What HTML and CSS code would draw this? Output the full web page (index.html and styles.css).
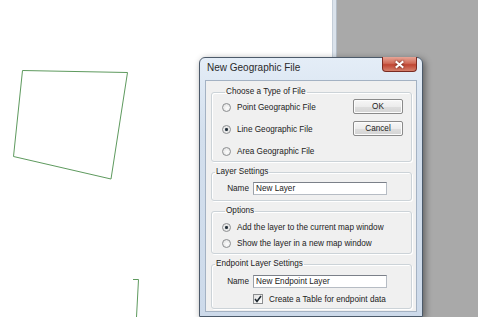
FILE: index.html
```html
<!DOCTYPE html>
<html lang="en">
<head>
  <meta charset="UTF-8" />
  <meta name="viewport" content="width=device-width, initial-scale=1.0" />
  <title>New Geographic File</title>
  <link rel="stylesheet" href="styles.css">
</head>
<body>
  <div class="desktop">
    <div class="map">
      <svg class="map-layer" width="332" height="317" viewBox="0 0 332 317">
        <polygon points="22.5,70.5 127.5,72.5 111,179 13.5,156.5" />
        <polyline points="133,279.5 138.5,279.5 136.5,317" />
      </svg>
    </div>
    <div class="edge"></div>
    <div class="workspace"></div>
  </div>

  <div class="dialog">
    <div class="titlebar">
      <span class="title">New Geographic File</span>
      <button class="close" title="Close">
        <svg width="11" height="9" viewBox="0 0 11 9">
          <path d="M2.5 2 L8.5 7 M8.5 2 L2.5 7" />
        </svg>
      </button>
    </div>

    <div class="client">
      <fieldset class="group group-type">
        <legend>Choose a Type of File</legend>
        <div class="type-row">
          <div class="choices">
            <label class="radio"><span class="mark"></span>Point Geographic File</label>
            <label class="radio checked"><span class="mark"></span>Line Geographic File</label>
            <label class="radio"><span class="mark"></span>Area Geographic File</label>
          </div>
          <div class="actions">
            <button class="btn">OK</button>
            <button class="btn">Cancel</button>
          </div>
        </div>
      </fieldset>

      <fieldset class="group group-layer">
        <legend>Layer Settings</legend>
        <div class="field">
          <span class="field-label">Name</span>
          <div class="textbox">New Layer</div>
        </div>
      </fieldset>

      <fieldset class="group group-options">
        <legend>Options</legend>
        <label class="radio checked"><span class="mark"></span>Add the layer to the current map window</label>
        <label class="radio"><span class="mark"></span>Show the layer in a new map window</label>
      </fieldset>

      <fieldset class="group group-endpoint">
        <legend>Endpoint Layer Settings</legend>
        <div class="field">
          <span class="field-label">Name</span>
          <div class="textbox">New Endpoint Layer</div>
        </div>
        <label class="check">
          <span class="box">
            <svg width="8" height="8" viewBox="0 0 8 8"><path d="M1 4 L3 6.5 L7 1" /></svg>
          </span>
          Create a Table for endpoint data
        </label>
      </fieldset>
    </div>
  </div>
</body>
</html>
```

FILE: styles.css
```css
/* Base */
* {
  margin: 0;
  padding: 0;
  box-sizing: border-box;
}

body {
  width: 478px;
  height: 317px;
  overflow: hidden;
  font-family: 'Liberation Sans', Arial, sans-serif;
  font-size: 8.2px;
  color: #222;
  background: #a9a9a9;
}

/* Map window + empty workspace behind the dialog */
.desktop {
  display: flex;
  height: 317px;
}

.map {
  width: 332px;
  background: #fff;
}

.map-layer {
  display: block;
  fill: none;
  stroke: #5e9a5e;
  stroke-width: 1;
}

.edge {
  width: 5px;
  background: #dbe3ec;
  border-left: 1px solid #c4ced9;
  border-right: 1px solid #b3bcc6;
}

.workspace {
  flex: 1;
  background: #a9a9a9;
}

/* Dialog window */
.dialog {
  position: absolute;
  left: 199px;
  top: 57px;
  width: 224px;
  height: 260px;
  display: flex;
  flex-direction: column;
  border: 1px solid #4c5a6a;
  border-radius: 6px 6px 0 0;
  background: linear-gradient(#e4edf7, #d3dfed 30%, #cddaea);
  box-shadow: 2px 2px 7px rgba(0, 0, 0, 0.45);
}

.titlebar {
  position: relative;
  height: 22px;
  padding: 4px 0 0 7px;
}

.title {
  font-size: 10px;
  color: #2a2a2a;
}

.close {
  position: absolute;
  top: -1px;
  right: 5px;
  width: 35px;
  height: 15px;
  display: flex;
  justify-content: center;
  align-items: center;
  border: 1px solid #7a2b22;
  border-top: none;
  border-radius: 0 0 4px 4px;
  background: linear-gradient(#e7a597, #d06a57 45%, #bf4532 55%, #d5806c);
}

.close svg {
  stroke: #fff;
  stroke-width: 2;
  stroke-linecap: square;
  filter: drop-shadow(0 0 1px #5a1a12);
}

.client {
  flex: 1;
  margin: 0 5px 4px;
  padding: 6px 4px 0 5px;
  display: flex;
  flex-direction: column;
  gap: 5px;
  background: #f0f0f0;
  border: 1px solid #a4b2c3;
}

/* Group boxes */
.group {
  min-width: 0;
  border: 1px solid #ccd3d8;
  border-radius: 3px;
  box-shadow: 1px 1px 0 #fff, inset 1px 1px 0 #fff;
}

.group legend {
  margin-left: 3px;
  padding: 0 1px;
  line-height: 10px;
}

.group-type {
  padding: 3px 8px 3px 10px;
}

.type-row {
  display: flex;
}

.choices {
  flex: 1;
  display: flex;
  flex-direction: column;
  gap: 8px;
}

.actions {
  display: flex;
  flex-direction: column;
  gap: 7px;
  margin-top: -1px;
}

.btn {
  width: 50px;
  height: 15px;
  font-family: inherit;
  font-size: 8.2px;
  color: #222;
  border: 1px solid #8a8a8a;
  border-radius: 2px;
  background: linear-gradient(#f7f7f7, #ececec 50%, #dedede 51%, #d4d4d4);
  box-shadow: inset 0 0 0 1px #fcfcfc;
}

/* Radio buttons + checkbox */
.radio {
  display: flex;
  align-items: center;
  height: 14px;
}

.mark {
  width: 9px;
  height: 9px;
  margin-right: 6px;
  border: 1px solid #8c8e90;
  border-radius: 50%;
  background: radial-gradient(circle at 60% 60%, #fdfdfd, #dcdcdc);
}

.radio.checked .mark {
  background: radial-gradient(circle, #1f2a33 0, #2c3a44 1.2px, #e4e4e4 2px, #f8f8f8);
}

.group-options {
  padding: 5px 0 4px 10px;
  display: flex;
  flex-direction: column;
  gap: 4px;
}

.group-options .radio {
  height: 12px;
}

/* Name fields */
.field {
  display: flex;
  align-items: center;
}

.field-label {
  width: 37px;
  margin-right: 4px;
  text-align: right;
}

.textbox {
  width: 134px;
  height: 13px;
  padding: 1px 2px;
  line-height: 10px;
  background: #fff;
  border: 1px solid #b6bcc4;
  border-top-color: #7b8089;
  border-left-color: #9aa0a8;
}

.group-layer {
  padding: 5px 0 5px;
}

.group-endpoint {
  padding: 6px 0 3px;
  display: flex;
  flex-direction: column;
  gap: 5px;
}

.check {
  display: flex;
  align-items: center;
  height: 12px;
  padding-left: 41px;
}

.box {
  width: 10px;
  height: 10px;
  margin-right: 6px;
  display: flex;
  justify-content: center;
  align-items: center;
  border: 1px solid #8c8e90;
  background: linear-gradient(135deg, #e2e2e2, #fdfdfd);
}

.box svg {
  fill: none;
  stroke: #1e2830;
  stroke-width: 1.6;
}
```
